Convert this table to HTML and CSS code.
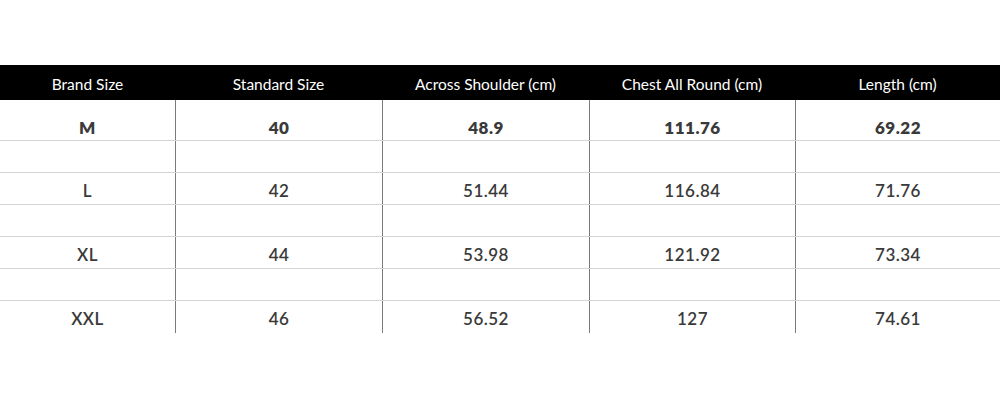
FILE: index.html
```html
<!DOCTYPE html>
<html>
<head>
<meta charset="utf-8">
<link rel="stylesheet" href="styles.css">
</head>
<body>
<div class="chart">
  <div class="head">
    <div class="hc">Brand Size</div>
    <div class="hc">Standard Size</div>
    <div class="hc">Across Shoulder (cm)</div>
    <div class="hc">Chest All Round (cm)</div>
    <div class="hc">Length (cm)</div>
  </div>
  <div class="row first bold">
    <div class="c">M</div><div class="c">40</div><div class="c">48.9</div><div class="c">111.76</div><div class="c">69.22</div>
  </div>
  <div class="row gap"><div class="c"></div><div class="c"></div><div class="c"></div><div class="c"></div><div class="c"></div></div>
  <div class="row">
    <div class="c">L</div><div class="c">42</div><div class="c">51.44</div><div class="c">116.84</div><div class="c">71.76</div>
  </div>
  <div class="row gap"><div class="c"></div><div class="c"></div><div class="c"></div><div class="c"></div><div class="c"></div></div>
  <div class="row">
    <div class="c">XL</div><div class="c">44</div><div class="c">53.98</div><div class="c">121.92</div><div class="c">73.34</div>
  </div>
  <div class="row gap"><div class="c"></div><div class="c"></div><div class="c"></div><div class="c"></div><div class="c"></div></div>
  <div class="row last">
    <div class="c">XXL</div><div class="c">46</div><div class="c">56.52</div><div class="c">127</div><div class="c">74.61</div>
  </div>
</div>
</body>
</html>
```
FILE: styles.css
```css
html, body {
  margin: 0;
  padding: 0;
  background: #fff;
}
body {
  font-family: Lato, "Liberation Sans", sans-serif;
}
.chart {
  margin-top: 65px;
  width: 1000px;
}
.head, .row {
  display: grid;
  grid-template-columns: 175px 207px 207px 206px 205px;
}
.head {
  background: #000;
  height: 35px;
  align-items: center;
}
.hc {
  color: #fff;
  font-size: 15.5px;
  text-align: center;
  padding-top: 2px;
}
.row {
  height: 32px;
  border-bottom: 1px solid #d4d4d4;
  box-sizing: border-box;
}
.row.first {
  height: 41px;
}
.row.last {
  border-bottom: none;
}
.c {
  display: flex;
  align-items: center;
  justify-content: center;
  font-size: 17px;
  font-weight: 600;
  color: #3a3a3a;
  letter-spacing: 0.5px;
  padding-top: 3px;
}
.row.first .c {
  padding-top: 14px;
}
.bold .c {
  font-weight: 800;
}
.c + .c {
  border-left: 1px solid #7a7a7a;
}
```
